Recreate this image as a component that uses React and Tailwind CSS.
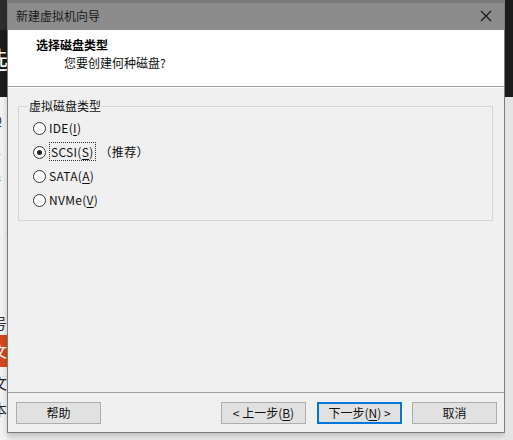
import React from "react";

const font = { fontFamily: '"Noto Sans CJK SC", "Microsoft YaHei", sans-serif' };

function U({ children }) {
  return <span className="underline underline-offset-2">{children}</span>;
}

function Radio({ checked, children }) {
  return (
    <div className="flex items-center h-[24px]">
      <div className="w-[13px] h-[13px] rounded-full border border-[#333] bg-white flex items-center justify-center shrink-0">
        {checked && <div className="w-[5px] h-[5px] rounded-full bg-[#222]" />}
      </div>
      <div className="ml-[3px] text-[12px] leading-[16px] tracking-[0.3px] text-[#111]">{children}</div>
    </div>
  );
}

function Btn({ children, primary, className = "" }) {
  return (
    <div
      className={
        "h-[22px] w-[85px] flex items-center justify-center text-[12px] text-[#111] bg-[#e1e1e1] " +
        (primary ? "border-2 border-[#0078d7]" : "border border-[#adadad]") +
        " " +
        className
      }
    >
      {children}
    </div>
  );
}

export default function App() {
  return (
    <div className="w-[513px] h-[440px] flex overflow-hidden bg-[#ebebeb]" style={font}>
      {/* left strip (window behind) */}
      <div className="w-[7px] shrink-0 flex flex-col overflow-hidden">
        <div className="h-[30px] bg-[#2d2d2d]" />
        <div className="h-[67px] bg-[#1c1c1c] flex flex-col">
          <div className="mt-[16px] -ml-[16px] text-[24px] leading-[26px] text-white">选</div>
        </div>
        <div className="flex-1 bg-[#f2f2f2] flex flex-col text-[#333]">
          <div className="mt-[16px] -ml-[7px] text-[12px] leading-[14px]">Q</div>
          <div className="mt-[16px] -ml-[7px] text-[12px] leading-[14px]">α</div>
          <div className="mt-[12px] -ml-[7px] text-[12px] leading-[14px]">ռ</div>
          <div className="mt-[10px] -ml-[7px] text-[12px] leading-[14px]">d</div>
          <div className="mt-[20px] -ml-[7px] text-[12px] leading-[14px]">ɑ</div>
          <div className="mt-[8px] -ml-[7px] text-[12px] leading-[14px]">ʚ</div>
          <div className="mt-[26px] -ml-[7px] text-[12px] leading-[14px]">u</div>
          <div className="mt-[12px] -ml-[8px] text-[15px] leading-[16px]">号</div>
          <div className="mt-[4px] h-[32px] bg-[#d4481d] flex items-center">
            <div className="-ml-[8px] text-[15px] text-white">文</div>
          </div>
          <div className="mt-[8px] -ml-[8px] text-[15px] leading-[16px] text-[#222]">文</div>
          <div className="mt-[10px] -ml-[8px] text-[15px] leading-[16px] text-[#222]">本</div>
        </div>
      </div>

      {/* dialog column */}
      <div className="w-[498px] shrink-0 flex flex-col">
        <div className="h-[433px] flex flex-col border-l border-r border-b border-[#7c7c7c] bg-[#f0f0f0] shadow-[0_3px_6px_rgba(0,0,0,0.2)]">
          {/* title bar */}
          <div className="h-[30px] shrink-0 bg-[#8c8c8c] border-t-[3px] border-[#7a7a7a] flex items-center pl-[8px] pr-[9px]">
            <div className="text-[12px] text-[#1a1a1a] flex-1 -mt-[2px]">新建虚拟机向导</div>
            <svg width="12" height="12" viewBox="0 0 12 12" className="-mt-[2px] mr-[3px]">
              <path d="M1 1 L11 11 M11 1 L1 11" stroke="#1a1a1a" strokeWidth="1.2" fill="none" />
            </svg>
          </div>
          {/* header */}
          <div className="h-[57px] shrink-0 bg-white border-b border-[#a0a0a0] pt-[7px] flex flex-col">
            <div className="pl-[28px] text-[12px] leading-[16px] font-bold text-[#000]">选择磁盘类型</div>
            <div className="pl-[56px] mt-[2px] text-[12px] leading-[16px] text-[#111]">您要创建何种磁盘?</div>
          </div>
          {/* body */}
          <div className="flex-1 border-t border-white pt-[10px] px-[10px]">
            <fieldset className="border border-[#d5d5d5] ml-0 mr-[1px] px-0 pb-[8px] h-[123px]">
              <legend className="ml-[9px] px-[1px] text-[12px] leading-[16px] text-[#111]">虚拟磁盘类型</legend>
              <div className="flex flex-col pt-[2px] pl-[14px]">
                <Radio>
                  IDE(<U>I</U>)
                </Radio>
                <Radio checked>
                  <span className="border border-dotted border-[#333] px-[1px]">
                    SCSI(<U>S</U>)
                  </span>
                  <span className="ml-[4px]">（推荐）</span>
                </Radio>
                <Radio>
                  SATA(<U>A</U>)
                </Radio>
                <Radio>
                  NVMe(<U>V</U>)
                </Radio>
              </div>
            </fieldset>
          </div>
          {/* footer */}
          <div className="h-[40px] shrink-0 border-t border-[#a0a0a0] flex items-start pt-[9px] pl-[8px] pr-[7px]">
            <Btn>帮助</Btn>
            <div className="flex-1" />
            <Btn>
              &lt; 上一步(<U>B</U>)
            </Btn>
            <Btn primary className="ml-[11px]">
              下一步(<U>N</U>) &gt;
            </Btn>
            <Btn className="ml-[10px]">取消</Btn>
          </div>
        </div>
      </div>

      {/* right strip */}
      <div className="w-[8px] shrink-0 flex flex-col">
        <div className="h-[97px] bg-[#1c1c1c]" />
        <div className="flex-1 bg-[#e4e4e4]" />
      </div>
    </div>
  );
}
